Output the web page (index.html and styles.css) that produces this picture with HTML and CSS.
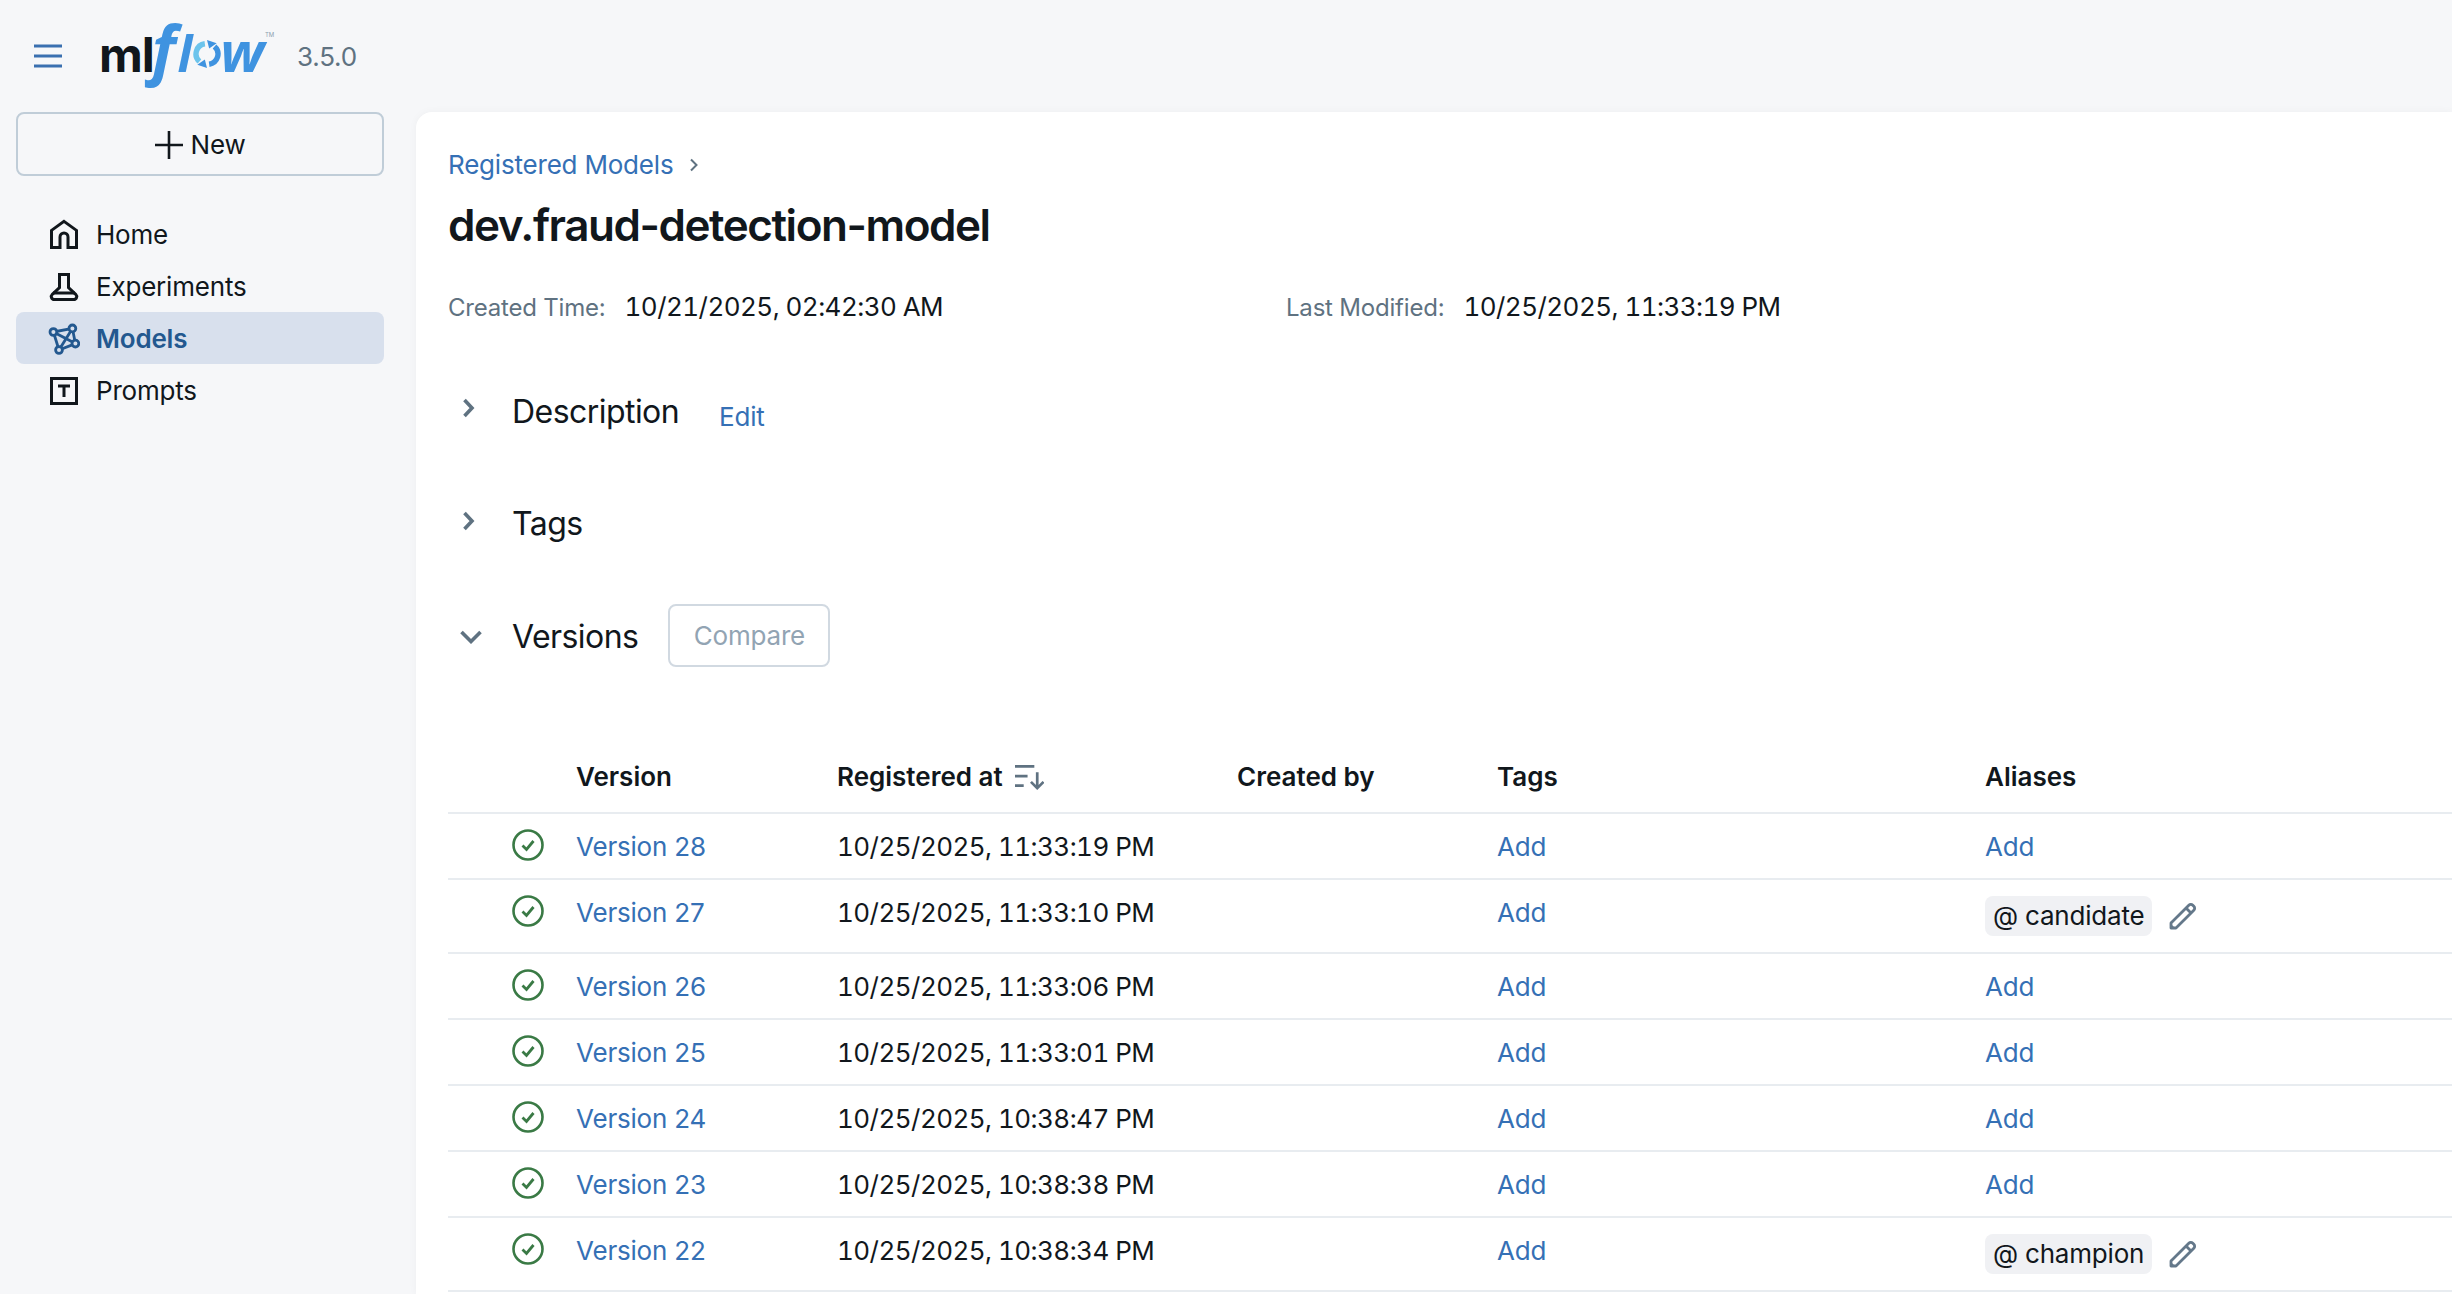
FILE: index.html
```html
<!DOCTYPE html>
<html lang="en">
<head>
  <meta charset="UTF-8" />
  <meta name="viewport" content="width=device-width, initial-scale=1.0" />
  <title>dev.fraud-detection-model - MLflow</title>
  <link rel="stylesheet" href="styles.css">
</head>
<body>
<svg class="defs" width="0" height="0">
  <symbol id="check" viewBox="0 0 32 32">
    <circle cx="16" cy="16" r="14.5" fill="none" stroke="currentColor" stroke-width="2.6"/>
    <path d="M10.5 16.5l4 4 7-8.500" fill="none" stroke="currentColor" stroke-width="2.8"/>
  </symbol>
  <symbol id="pencil" viewBox="0 0 28 28">
    <path d="M2 26v-5L19.800 3.200a2.800 2.800 0 0 1 4 0l1 1a2.800 2.800 0 0 1 0 4L7 26z" fill="none" stroke="currentColor" stroke-width="2.800" stroke-linejoin="round"/>
    <path d="M17 6l5 5" stroke="currentColor" stroke-width="2.800"/>
    <path d="M1 27v-6l6 6z" fill="currentColor"/>
  </symbol>
</svg>

<header class="topbar">
  <svg class="burger" width="28" height="24" viewBox="0 0 28 24"><path d="M0 2h28M0 12h28M0 22h28" stroke="currentColor" stroke-width="3"/></svg>
  <div class="logo">
    <span class="logo-ml">ml</span><span class="logo-f">f</span><span class="logo-l">l</span><svg class="logo-o" width="28" height="28" viewBox="0 0 26 26"><path d="M11 3.500A9.500 9.500 0 0 0 6 20" fill="none" stroke="#6cc4ec" stroke-width="5"/><path d="M15 22.500A9.500 9.500 0 0 0 20 6" fill="none" stroke="#3f93e0" stroke-width="5"/><path d="M13 0l9 3-7 5zM13 26l-9-3 7-5z" fill="#3f93e0"/></svg><span class="logo-w">w</span><span class="logo-tm">TM</span>
  </div>
  <span class="version">3.5.0</span>
</header>

<div class="layout">
  <aside class="sidebar">
    <button class="new-btn">
      <svg width="28" height="28" viewBox="0 0 28 28"><path d="M14 0v28M0 14h28" stroke="currentColor" stroke-width="2.6"/></svg>
      New
    </button>
    <nav class="nav">
      <a class="nav-item">
        <svg width="32" height="32" viewBox="0 0 16 16"><path d="M8 1.200l6.250 4.500v8.550H10V9a2 2 0 0 0-4 0v5.250H1.750V5.700z" fill="none" stroke="currentColor" stroke-width="1.500"/></svg>
        Home
      </a>
      <a class="nav-item">
        <svg width="32" height="32" viewBox="0 0 16 16"><path d="M5.750 1.750h4.500v6.500l3.600 3.400c1 1 .4 2.600-1 2.600H3.150c-1.400 0-2-1.600-1-2.600l3.600-3.400z" fill="none" stroke="currentColor" stroke-width="1.500"/><path d="M2.500 11h11" stroke="currentColor" stroke-width="1.500"/></svg>
        Experiments
      </a>
      <a class="nav-item active">
        <svg class="models-icon" width="32" height="32" viewBox="0 0 16 16" fill="none" stroke="currentColor" stroke-width="1.400"><path d="M2.700 4.500L12.200 2.700M2.700 4.500L13.700 10.300M2.700 4.500L5.500 13.500M12.200 2.700L5.500 13.500M12.200 2.700L13.700 10.300M5.500 13.500L13.700 10.300"/><circle cx="2.700" cy="4.500" r="1.700"/><circle cx="12.200" cy="2.700" r="1.700"/><circle cx="13.700" cy="10.300" r="1.700"/><circle cx="5.500" cy="13.500" r="1.700"/></svg>
        Models
      </a>
      <a class="nav-item">
        <svg width="32" height="32" viewBox="0 0 16 16" fill="none" stroke="currentColor" stroke-width="1.500"><rect x="1.750" y="1.750" width="12.500" height="12.500"/><path d="M5 5.500h6M8 5.500v5.500"/></svg>
        Prompts
      </a>
    </nav>
  </aside>

  <main class="main">
    <div class="breadcrumb">
      <a class="link">Registered Models</a>
      <svg width="10" height="16" viewBox="0 0 10 16"><path d="M2 2.500L7.500 8 2 13.500" fill="none" stroke="currentColor" stroke-width="2"/></svg>
    </div>
    <h1>dev.fraud-detection-model</h1>
    <div class="meta">
      <div class="meta-item"><span class="meta-label">Created Time:</span><span class="date">10/21/2025, 02:42:30 AM</span></div>
      <div class="meta-item"><span class="meta-label">Last Modified:</span><span class="date">10/25/2025, 11:33:19 PM</span></div>
    </div>

    <section class="section-head description">
      <svg class="chev-right" width="14" height="20" viewBox="0 0 14 20"><path d="M2.500 2l7.500 8-7.500 8" fill="none" stroke="currentColor" stroke-width="3.600"/></svg>
      <h2>Description</h2>
      <a class="link edit">Edit</a>
    </section>
    <section class="section-head tags">
      <svg class="chev-right" width="14" height="20" viewBox="0 0 14 20"><path d="M2.500 2l7.500 8-7.500 8" fill="none" stroke="currentColor" stroke-width="3.600"/></svg>
      <h2>Tags</h2>
    </section>
    <section class="section-head">
      <svg class="chev-down" width="22" height="14" viewBox="0 0 22 14"><path d="M1.500 2l9.500 9.500L20.500 2" fill="none" stroke="currentColor" stroke-width="3.600"/></svg>
      <h2>Versions</h2>
      <button class="compare">Compare</button>
    </section>

    <div class="table">
      <div class="row head">
        <div></div>
        <div>Version</div>
        <div class="sorted">Registered at
          <svg width="29" height="26" viewBox="0 0 30 26" fill="none" stroke="currentColor" stroke-width="2.800"><path d="M0 2h20M0 12h13M0 22h9M23 8v16M16.500 18l6.500 6.500 6.500-6.500"/></svg>
        </div>
        <div>Created by</div>
        <div>Tags</div>
        <div>Aliases</div>
      </div>

      <div class="row">
        <svg class="status"><use href="#check"/></svg>
        <a class="link">Version 28</a>
        <div class="date">10/25/2025, 11:33:19 PM</div>
        <div></div>
        <a class="link">Add</a>
        <a class="link">Add</a>
      </div>
      <div class="row">
        <svg class="status"><use href="#check"/></svg>
        <a class="link">Version 27</a>
        <div class="date">10/25/2025, 11:33:10 PM</div>
        <div></div>
        <a class="link">Add</a>
        <div class="aliases">
          <span class="chip">@ candidate</span>
          <svg class="pencil"><use href="#pencil"/></svg>
        </div>
      </div>
      <div class="row">
        <svg class="status"><use href="#check"/></svg>
        <a class="link">Version 26</a>
        <div class="date">10/25/2025, 11:33:06 PM</div>
        <div></div>
        <a class="link">Add</a>
        <a class="link">Add</a>
      </div>
      <div class="row">
        <svg class="status"><use href="#check"/></svg>
        <a class="link">Version 25</a>
        <div class="date">10/25/2025, 11:33:01 PM</div>
        <div></div>
        <a class="link">Add</a>
        <a class="link">Add</a>
      </div>
      <div class="row">
        <svg class="status"><use href="#check"/></svg>
        <a class="link">Version 24</a>
        <div class="date">10/25/2025, 10:38:47 PM</div>
        <div></div>
        <a class="link">Add</a>
        <a class="link">Add</a>
      </div>
      <div class="row">
        <svg class="status"><use href="#check"/></svg>
        <a class="link">Version 23</a>
        <div class="date">10/25/2025, 10:38:38 PM</div>
        <div></div>
        <a class="link">Add</a>
        <a class="link">Add</a>
      </div>
      <div class="row">
        <svg class="status"><use href="#check"/></svg>
        <a class="link">Version 22</a>
        <div class="date">10/25/2025, 10:38:34 PM</div>
        <div></div>
        <a class="link">Add</a>
        <div class="aliases">
          <span class="chip">@ champion</span>
          <svg class="pencil"><use href="#pencil"/></svg>
        </div>
      </div>
    </div>
  </main>
</div>
</body>
</html>
```

FILE: styles.css
```css
html,
body {
  margin: 0;
  padding: 0;
  height: 100%;
  overflow: hidden;
  background-color: #f6f7f9;
  font-family: Inter, "Liberation Sans", sans-serif;
  font-size: 26px;
  line-height: 32px;
  letter-spacing: -0.2px;
  color: #11171c;
}
.defs {
  display: block;
  height: 0;
}
.date {
  font-variant-numeric: tabular-nums;
  letter-spacing: -0.55px;
}
.topbar {
  display: flex;
  align-items: center;
  height: 112px;
  padding-left: 34px;
  box-sizing: border-box;
}
.burger {
  color: #3a70b0;
}
.logo {
  display: flex;
  align-items: baseline;
  margin: -18px 0 0 37px;
  width: 198px;
  height: 73px;
  line-height: 73px;
}
.logo-ml {
  font-size: 48px;
  font-weight: 700;
  letter-spacing: -1px;
}
.logo-f,
.logo-l,
.logo-w {
  font-family: "Open Sans", sans-serif;
  font-style: italic;
  font-weight: 700;
  color: #3f93e0;
}
.logo-f {
  font-size: 64px;
  margin: 0 2px 0 -2px;
}
.logo-l {
  font-size: 50px;
}
.logo-w {
  font-size: 56px;
  margin-left: -1px;
}
.logo-o {
  align-self: center;
  margin: 14px 0 0 1px;
}
.logo-tm {
  font-size: 6px;
  color: #8aa0b0;
  align-self: flex-start;
  line-height: 48px;
  margin-left: 1px;
}
.version {
  color: #5f7281;
  padding-top: 2px;
}
.layout {
  display: flex;
  height: calc(100% - 112px);
}
.sidebar {
  width: 416px;
  flex: none;
  padding: 0 32px 0 16px;
  box-sizing: border-box;
}
.new-btn {
  display: flex;
  align-items: center;
  justify-content: center;
  gap: 8px;
  width: 100%;
  height: 64px;
  padding-top: 2px;
  background: none;
  border: 2px solid #c0cdd8;
  border-radius: 8px;
  font: inherit;
  letter-spacing: inherit;
  color: inherit;
}
.nav {
  margin-top: 32px;
}
.nav-item {
  display: flex;
  align-items: center;
  gap: 16px;
  height: 52px;
  box-sizing: border-box;
  padding: 2px 0 0 32px;
  border-radius: 8px;
}
.nav-item.active {
  background-color: #d8e0ed;
  color: #23588f;
  font-weight: 600;
}
.models-icon circle {
  fill: #d8e0ed;
}
.main {
  flex: 1;
  background-color: white;
  border-top-left-radius: 16px;
  box-shadow: 0 0 8px rgba(0, 0, 0, 0.04);
  padding: 33px 0 0 32px;
  overflow: hidden;
}
.link {
  color: #3570b5;
}
.breadcrumb {
  display: flex;
  align-items: center;
  gap: 16px;
  height: 40px;
  color: #5f7281;
}
h1 {
  margin: 12px 0 0;
  font-size: 44px;
  line-height: 56px;
  font-weight: 600;
  letter-spacing: -1.45px;
}
.meta {
  display: flex;
  margin-top: 34px;
  height: 40px;
  align-items: center;
}
.meta-item {
  width: 838px;
}
.meta-label {
  font-size: 24px;
  color: #5f7281;
  margin-right: 19px;
}
.section-head {
  display: flex;
  align-items: center;
  height: 64px;
  margin-bottom: 47px;
}
.meta + .section-head {
  margin-top: 54px;
}
.chev-right,
.chev-down {
  color: #5f7281;
  flex: none;
}
.chev-right {
  width: 14px;
  margin: -10px 36px 0 14px;
}
.chev-down {
  margin: 4px 30px 0 12px;
}
h2 {
  margin: 3px 0 0;
  font-size: 32px;
  line-height: 40px;
  font-weight: 400;
  letter-spacing: -0.55px;
}
.description h2 {
  margin-top: -2px;
}
.tags h2 {
  margin-top: 0;
}
.tags .chev-right {
  margin-top: -7px;
}
.edit {
  margin: 8px 0 0 40px;
}
.compare {
  height: 63px;
  width: 162px;
  margin-left: 30px;
  padding-top: 3px;
  background: none;
  border: 2px solid #d1d9e1;
  border-radius: 8px;
  font: inherit;
  letter-spacing: inherit;
  color: #92a4b3;
}
.table {
  margin-top: 73px;
}
.row {
  display: grid;
  grid-template-columns: 128px 261px 400px 260px 488px 1fr;
  align-items: start;
  padding: 17px 0 15px;
  border-bottom: 2px solid #e8ecf0;
}
.row.head {
  font-weight: 600;
  padding: 21px 0 19px;
  letter-spacing: 0;
}
.sorted {
  display: flex;
  align-items: center;
  gap: 12px;
}
.sorted svg {
  color: #5f7281;
}
.status {
  width: 32px;
  height: 32px;
  margin: -2px 0 0 64px;
  color: #3a7a45;
}
.aliases {
  display: flex;
  align-items: center;
  gap: 17px;
  margin: -1px 0 1px;
}
.chip {
  display: inline-block;
  height: 40px;
  line-height: 40px;
  padding: 0 8px;
  border-radius: 8px;
  background-color: #f0f1f4;
}
.pencil {
  width: 28px;
  height: 28px;
  color: #64788a;
}
```
